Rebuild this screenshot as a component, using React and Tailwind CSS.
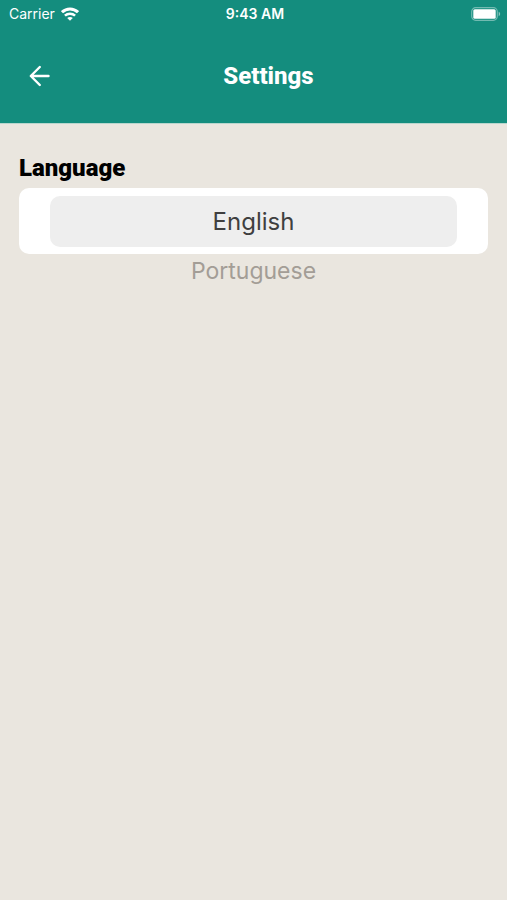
import React, { useState } from 'react';

const LANGUAGES = ['English', 'Portuguese'];

const WifiIcon = () => (
  <svg viewBox="0 0 18 14" className="w-[18px] h-[14px]" fill="none" stroke="currentColor" strokeWidth="3" aria-hidden="true">
    <path d="M1 5.200C5.600.800 12.400.800 17 5.200" />
    <path d="M3.900 8.700c2.900-2.700 7.300-2.700 10.200 0" strokeWidth="2.500" />
    <path d="M9 13.800 6.200 11c1.600-1.500 4-1.500 5.600 0z" fill="currentColor" stroke="none" />
  </svg>
);

const BatteryIcon = () => (
  <svg viewBox="0 0 30 14" className="w-[30px] h-[14px]" aria-hidden="true">
    <rect x="0.700" y="0.700" width="25.600" height="12.600" rx="4" fill="none" stroke="white" strokeOpacity="0.4" strokeWidth="1.200" />
    <rect x="2.300" y="2.300" width="22.400" height="9.400" rx="1.500" fill="white" />
    <path d="M27.700 4.800c1.900.7 1.900 3.700 0 4.400z" fill="white" fillOpacity="0.500" />
  </svg>
);

const BackIcon = () => (
  <svg viewBox="0 0 22 22" className="w-[22px] h-[22px]" fill="none" stroke="currentColor" strokeWidth="2.400" strokeLinecap="round" strokeLinejoin="round" aria-hidden="true">
    <path d="M20.500 11H3M11.800 2 2.800 11l9 9" />
  </svg>
);

const StatusBar = () => (
  <div className="grid grid-cols-3 items-center h-7 pl-[9px] pr-1.5 text-sm font-['Inter',sans-serif]">
    <div className="flex items-center gap-1.5">
      <span>Carrier</span>
      <WifiIcon />
    </div>
    <span className="text-center font-semibold">9:43 AM</span>
    <div className="flex justify-end">
      <BatteryIcon />
    </div>
  </div>
);

const Header = () => (
  <header className="bg-[#148d7e] text-white border-b border-[#b9d6cd]">
    <StatusBar />
    <div className="flex items-center h-[95px] pl-7 pr-5">
      <button type="button" aria-label="Back" className="cursor-pointer">
        <BackIcon />
      </button>
      <h1 className="flex-1 text-center text-2xl font-extrabold font-['Roboto',sans-serif]">Settings</h1>
    </div>
  </header>
);

const LanguagePicker = ({ selected, onSelect }) => {
  const others = LANGUAGES.filter(lang => lang !== selected);

  return (
    <div role="group" aria-labelledby="language-label" className="font-['Inter',sans-serif]">
      <div className="bg-white rounded-[10px] px-[31px] pt-2 pb-[7px]">
        <button
          type="button"
          aria-pressed="true"
          className="block w-full h-[51px] rounded-[10px] bg-[#eeeeee] text-[#3f3f3f] text-2xl"
        >
          {selected}
        </button>
      </div>
      {others.map(lang => (
        <button
          key={lang}
          type="button"
          aria-pressed="false"
          onClick={() => onSelect(lang)}
          className="block w-full h-7 text-[#a39d96] text-[23px] cursor-pointer"
        >
          {lang}
        </button>
      ))}
    </div>
  );
};

const App = () => {
  const [language, setLanguage] = useState('English');

  return (
    <div className="min-h-screen bg-[#eae6df]">
      <Header />
      <main className="px-[19px] pt-7">
        <h2 id="language-label" className="h-9 leading-8 text-2xl font-black text-black font-['Roboto',sans-serif]">
          Language
        </h2>
        <LanguagePicker selected={language} onSelect={setLanguage} />
      </main>
    </div>
  );
};

export default App;
